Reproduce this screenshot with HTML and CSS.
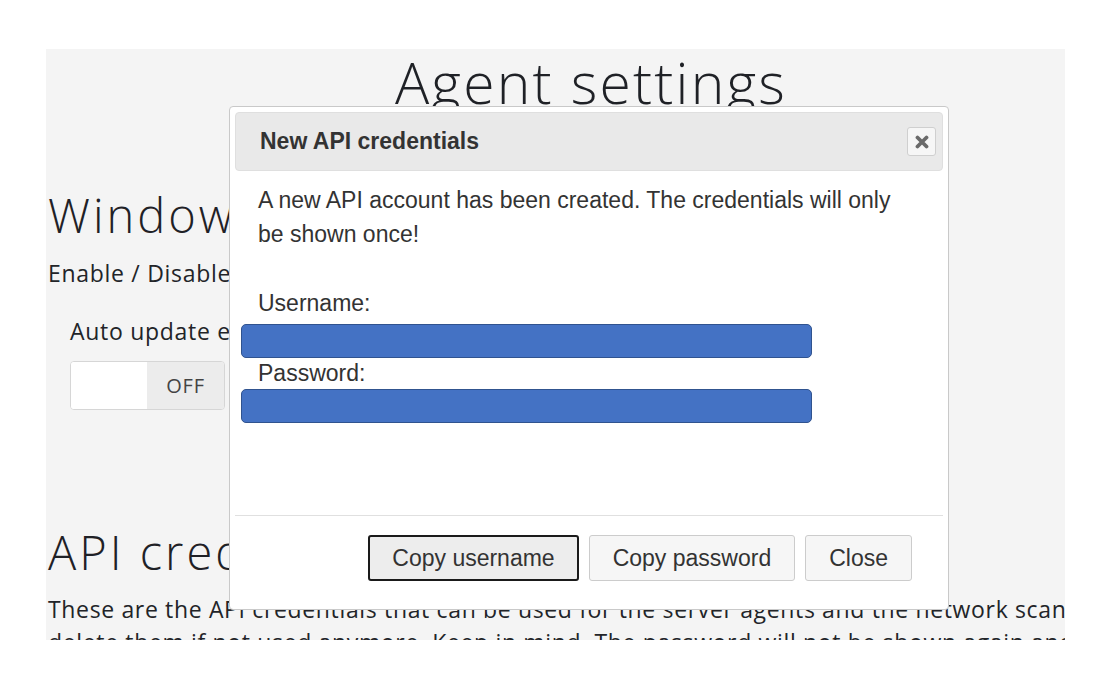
FILE: index.html
```html
<!DOCTYPE html>
<html lang="en">
<head>
<meta charset="utf-8">
<title>Agent settings</title>
<link rel="stylesheet" href="styles.css">
</head>
<body>
<div class="page">
  <div class="canvas">
    <h1 class="title">Agent settings</h1>
    <h2 class="section-title section-windows">Windows agent</h2>
    <p class="lead">Enable / Disable automatic updates of the Windows agent.</p>
    <div class="setting">
      <div class="setting-label">Auto update enabled</div>
      <div class="toggle"><span class="toggle-on"></span><span class="toggle-off">OFF</span></div>
    </div>
    <h2 class="section-title section-api">API credentials</h2>
    <p class="para">These are the API credentials that can be used for the server agents and the network scanner. You can delete them if not used anymore. Keep in mind. The password will not be shown again and cannot be recreated.</p>
  </div>
</div>

<div class="dialog" role="dialog">
  <div class="dialog-header">
    <span class="dialog-title">New API credentials</span>
    <button class="dialog-x" type="button" aria-label="close">
      <svg width="14" height="14" viewBox="0 0 14 14"><path d="M2.5 2.5 L11.5 11.5 M11.5 2.5 L2.5 11.5" stroke="#6a6a6a" stroke-width="3.8" stroke-linecap="round"/></svg>
    </button>
  </div>
  <div class="dialog-body">
    <p class="dialog-text">A new API account has been created. The credentials will only be shown once!</p>
    <div class="field-label field-user">Username:</div>
    <div class="redact redact-user"></div>
    <div class="field-label field-pass">Password:</div>
    <div class="redact redact-pass"></div>
  </div>
  <div class="dialog-footer">
    <button class="btn btn-focus" type="button">Copy username</button>
    <button class="btn" type="button">Copy password</button>
    <button class="btn" type="button">Close</button>
  </div>
</div>
</body>
</html>
```

FILE: styles.css
```css
html, body {
  margin: 0;
  padding: 0;
  background: #ffffff;
}

body {
  width: 1119px;
  height: 674px;
  overflow: hidden;
  position: relative;
  font-family: "Open Sans", "Liberation Sans", sans-serif;
  color: #222428;
}

.page {
  margin: 49px 0 0 46px;
  width: 1019px;
  height: 591px;
  background: #f4f4f4;
  overflow: hidden;
}

.canvas {
  width: 1088px;
  padding-left: 2px;
  box-sizing: border-box;
}

.title {
  margin: 0;
  text-align: center;
  font-size: 57px;
  font-weight: 300;
  line-height: 66px;
  letter-spacing: 2.2px;
  color: #1f2126;
}

.section-title {
  margin: 0;
  font-size: 47px;
  font-weight: 300;
  line-height: 56px;
  letter-spacing: 3px;
  color: #1f2126;
}

.section-windows {
  margin-top: 72px;
}

.lead {
  margin: 15px 0 0;
  font-size: 23px;
  line-height: 30px;
  letter-spacing: 0.7px;
  white-space: nowrap;
}

.setting {
  margin: 28px 0 0 22px;
}

.setting-label {
  font-size: 23px;
  line-height: 30px;
  letter-spacing: 0.7px;
}

.toggle {
  margin-top: 15px;
  width: 155px;
  height: 49px;
  box-sizing: border-box;
  border: 1px solid #d6d6d6;
  border-radius: 4px;
  display: flex;
  overflow: hidden;
  background: #fff;
}

.toggle-on {
  width: 76px;
  background: #ffffff;
}

.toggle-off {
  flex: 1;
  background: #ececec;
  display: flex;
  align-items: center;
  justify-content: center;
  font-size: 20px;
  letter-spacing: 0.8px;
  color: #444;
}

.section-api {
  margin-top: 114px;
}

.para {
  margin: 13px 0 0;
  width: 1215px;
  font-size: 23px;
  line-height: 33px;
  letter-spacing: 0.65px;
}

/* Dialog */
.dialog {
  position: absolute;
  left: 229px;
  top: 106px;
  width: 720px;
  height: 504px;
  box-sizing: border-box;
  border: 1px solid #c9c9c9;
  border-radius: 4px;
  padding: 5px;
  background: #ffffff;
  display: flex;
  flex-direction: column;
  font-family: "Liberation Sans", Arial, sans-serif;
  color: #333333;
}

.dialog-header {
  height: 59px;
  flex: none;
  box-sizing: border-box;
  background: #e9e9e9;
  border: 1px solid #dfdfdf;
  border-radius: 4px;
  display: flex;
  align-items: center;
  justify-content: space-between;
  padding: 0 6px 0 24px;
}

.dialog-title {
  font-size: 23px;
  font-weight: bold;
  color: #333;
}

.dialog-x {
  width: 29px;
  height: 29px;
  padding: 0;
  box-sizing: border-box;
  border: 1px solid #cfcfcf;
  border-radius: 3px;
  background: #f6f6f6;
  display: flex;
  align-items: center;
  justify-content: center;
}

.dialog-body {
  flex: 1;
  padding: 12px 0 0 6px;
}

.dialog-text {
  margin: 0 0 0 17px;
  width: 660px;
  font-size: 23px;
  line-height: 34px;
}

.field-label {
  margin-left: 17px;
  font-size: 23px;
  line-height: 26px;
}

.field-user {
  margin-top: 39px;
}

.field-pass {
  margin-top: 2px;
}

.redact {
  width: 571px;
  height: 34px;
  box-sizing: border-box;
  background: #4472c4;
  border: 1px solid #30538f;
  border-radius: 5px;
}

.redact-user {
  margin-top: 8px;
}

.redact-pass {
  margin-top: 3px;
}

.dialog-footer {
  flex: none;
  border-top: 1px solid #e0e0e0;
  padding: 19px 31px 23px 0;
  display: flex;
  justify-content: flex-end;
  gap: 10px;
}

.btn {
  height: 46px;
  box-sizing: border-box;
  padding: 0 23px;
  border: 1px solid #cccccc;
  border-radius: 3px;
  background: #f6f6f6;
  font-family: "Liberation Sans", Arial, sans-serif;
  font-size: 23px;
  color: #333;
}

.btn-focus {
  border: 2px solid #1a1a1a;
  padding: 0 22px;
  background: #ededed;
}
```
